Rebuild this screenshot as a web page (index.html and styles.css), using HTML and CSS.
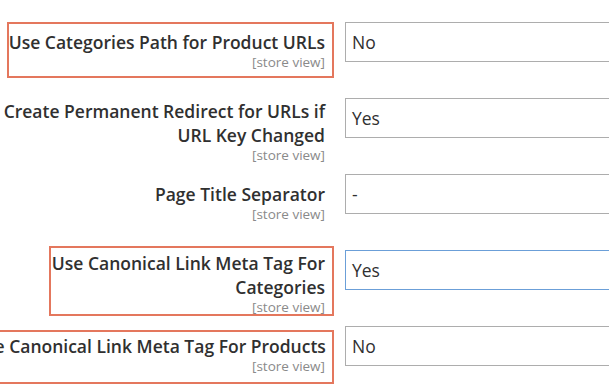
FILE: index.html
```html
<!DOCTYPE html>
<html lang="en">
<head>
    <meta charset="UTF-8">
    <meta name="viewport" content="width=device-width, initial-scale=1.0">
    <title>Search Engine Optimization</title>
    <link rel="stylesheet" href="styles.css">
</head>
<body>
    <div class="fieldset">
        <!-- Categories path -->
        <div class="field">
            <div class="label">
                <span class="label-text">Use Categories Path for Product URLs</span>
                <span class="scope">[store view]</span>
                <span class="mark mark-path"></span>
            </div>
            <div class="control">No</div>
        </div>

        <!-- Permanent redirect -->
        <div class="field">
            <div class="label multi">
                <span class="label-text">Create Permanent Redirect for URLs if URL Key Changed</span>
                <span class="scope">[store view]</span>
            </div>
            <div class="control">Yes</div>
        </div>

        <!-- Title separator -->
        <div class="field">
            <div class="label">
                <span class="label-text">Page Title Separator</span>
                <span class="scope">[store view]</span>
            </div>
            <div class="control">-</div>
        </div>

        <!-- Canonical for categories -->
        <div class="field">
            <div class="label multi">
                <span class="label-text">Use Canonical Link Meta Tag For Categories</span>
                <span class="scope">[store view]</span>
                <span class="mark mark-categories"></span>
            </div>
            <div class="control focused">Yes</div>
        </div>

        <!-- Canonical for products -->
        <div class="field">
            <div class="label">
                <span class="label-text nowrap">Use Canonical Link Meta Tag For Products</span>
                <span class="scope">[store view]</span>
                <span class="mark mark-products"></span>
            </div>
            <div class="control">No</div>
        </div>
    </div>
</body>
</html>
```

FILE: styles.css
```css
/* Config form */
body {
    margin: 0;
    padding: 0;
    background: #fff;
    color: #303030;
    font-family: 'Open Sans', 'Noto Sans', sans-serif;
    overflow: hidden;
}

.fieldset {
    margin-left: -27px;
    padding-top: 22px;
}

.field {
    display: flex;
    align-items: flex-start;
    gap: 20px;
    height: 76px;
}

.label {
    position: relative;
    flex: 0 0 352px;
    width: 352px;
    padding-top: 8px;
    text-align: right;
}

.label.multi {
    padding-top: 1px;
}

.label-text {
    display: block;
    font-size: 17.5px;
    font-weight: 600;
    line-height: 24px;
}

.nowrap {
    white-space: nowrap;
}

.scope {
    display: block;
    font-size: 13.5px;
    line-height: 16px;
    color: #8a8a8a;
}

.control {
    flex: 0 0 320px;
    height: 40px;
    box-sizing: border-box;
    border: 1px solid #adadad;
    padding: 0 6px;
    font-size: 17.5px;
    line-height: 38px;
    color: #303030;
}

.control.focused {
    border-color: #6b9fd8;
}

/* red highlight boxes */
.mark {
    position: absolute;
    right: -9px;
    border: 2px solid #e4775d;
}

.mark-path {
    top: 0;
    bottom: -8px;
    left: 34px;
}

.mark-categories {
    top: -4px;
    bottom: -1px;
    left: 76px;
}

.mark-products {
    top: 4px;
    bottom: -10px;
    left: 10px;
}
```
